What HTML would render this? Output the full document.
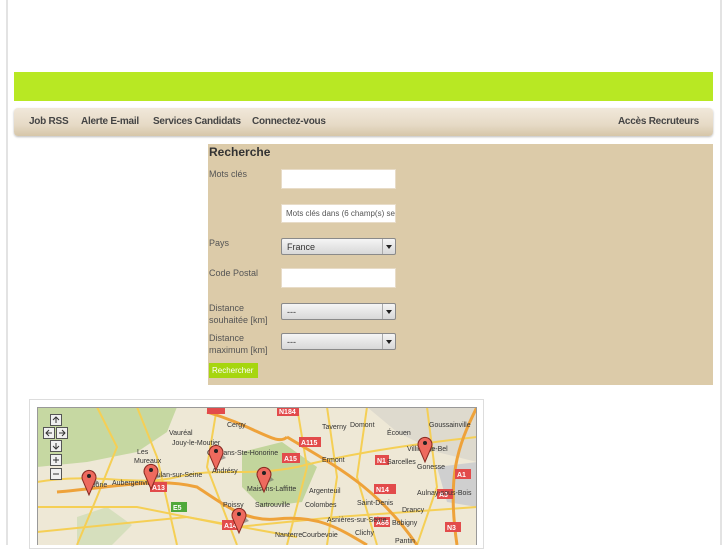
<!DOCTYPE html>
<html><head><meta charset="utf-8"><style>
*{margin:0;padding:0;box-sizing:border-box}
body{width:727px;height:545px;overflow:hidden;background:#fff;font-family:"Liberation Sans",sans-serif;position:relative}
.abs{position:absolute}
.frame{left:6px;top:0;width:716px;height:545px;border-left:2px solid #e3e3e3;border-right:2px solid #e3e3e3}
.green{left:14px;top:72px;width:699px;height:29px;background:#b8e823}
.nav{left:14px;top:108px;width:699px;height:28px;border-radius:4px;background:linear-gradient(#f1e8da,#e6dac6 60%,#d6c6a8);box-shadow:0 1px 2px #bbb}
.nav span{position:absolute;top:8px;font-size:10px;font-weight:bold;color:#444;letter-spacing:-0.25px}
.panel{left:208px;top:144px;width:505px;height:241px;background:#dccba9}
.lbl{font-size:9px;color:#555;line-height:12px}
.inp{background:#fff;border:1px solid #e8dcc8;left:281px;width:115px}
.sel{left:281px;width:115px;height:17px;border:1px solid #8a8a8a;border-radius:2px;background:linear-gradient(#f5f5f5,#d8d8d8);font-size:9px;color:#333;padding:3px 5px}
.sel:after{content:"";position:absolute;right:0;top:0;width:12px;height:15px;border-left:1px solid #aaa}
.sel i{position:absolute;right:3px;top:6px;border:3px solid transparent;border-top:4px solid #222;width:0;height:0;z-index:2}
</style></head><body>
<div class="abs frame"></div>
<div class="abs green"></div>
<div class="abs nav">
<span style="left:15px">Job RSS</span>
<span style="left:67px">Alerte E-mail</span>
<span style="left:139px">Services Candidats</span>
<span style="left:238px">Connectez-vous</span>
<span style="right:14px">Accès Recruteurs</span>
</div>
<div class="abs panel"></div>
<div class="abs" style="left:209px;top:145px;font-size:12px;font-weight:bold;color:#333">Recherche</div>
<div class="abs lbl" style="left:209px;top:168px">Mots clés</div>
<div class="abs inp" style="top:169px;height:20px"></div>
<div class="abs inp" style="top:204px;height:19px;font-size:8px;color:#555;padding:4px 0 0 4px;white-space:nowrap;overflow:hidden">Mots clés dans (6 champ(s) se</div>
<div class="abs lbl" style="left:209px;top:237px">Pays</div>
<div class="abs sel" style="top:238px">France<i></i></div>
<div class="abs lbl" style="left:209px;top:267px">Code Postal</div>
<div class="abs inp" style="top:268px;height:20px"></div>
<div class="abs lbl" style="left:209px;top:302px">Distance<br>souhaitée [km]</div>
<div class="abs sel" style="top:303px">---<i></i></div>
<div class="abs lbl" style="left:209px;top:332px">Distance<br>maximum [km]</div>
<div class="abs sel" style="top:333px">---<i></i></div>
<div class="abs" style="left:209px;top:363px;width:49px;height:15px;background:#a6d60f;color:#fff;font-size:8px;padding:3px 0 0 3px">Rechercher</div>

<div class="abs" style="left:29px;top:399px;width:455px;height:150px;border:1px solid #ddd"></div>
<svg class="abs" style="left:37px;top:407px" width="440" height="138" viewBox="0 0 440 138">
<rect width="440" height="138" fill="#eee8d6"/>
<path d="M0 0H140L130 25 100 45 50 55 0 60Z" fill="#c6d8a2"/>
<path d="M40 110 70 100 95 118 75 138H40Z" fill="#d6dfbd"/>
<path d="M205 45 245 35 280 60 265 95 225 100 205 80Z" fill="#c2d59c"/>
<path d="M330 0H440V55L400 45 360 25Z" fill="#dedace"/>
<path d="M400 60 440 55V100L410 95Z" fill="#cfcfcf"/>
<g fill="none" stroke="#f5cf55" stroke-width="2">
<path d="M0 75 C60 65 100 80 140 70 180 60 210 70 260 60 300 50 350 40 440 30"/>
<path d="M60 0 80 40 60 90 40 138"/><path d="M180 0 170 60 200 138"/>
<path d="M260 0 270 60 250 138"/><path d="M330 0 320 70 340 138"/>
<path d="M0 100 100 100 200 120 300 110 440 100"/><path d="M390 0 400 80 380 138"/>
<path d="M100 0 120 50 140 138"/><path d="M290 0 300 70 290 138"/><path d="M0 125 150 110 260 130"/>
</g>
<g fill="none" stroke="#eea23a" stroke-width="3">
<path d="M20 85 C80 80 120 70 160 80 190 100 210 115 240 112 280 108 300 120 330 138"/>
<path d="M440 0 C420 40 410 70 420 138"/><path d="M250 30 C300 60 340 80 380 138"/>
<path d="M170 5 C220 20 240 40 250 30"/>
</g>
<g font-size="7" fill="#fff" font-weight="bold">
<rect x="170" y="0" width="18" height="7" fill="#e24b4b"/>
<rect x="240" y="0" width="22" height="9" fill="#e24b4b"/><text x="242" y="7">N184</text>
<rect x="262" y="30" width="22" height="10" fill="#e24b4b"/><text x="264" y="38">A115</text>
<rect x="245" y="46" width="18" height="10" fill="#e24b4b"/><text x="247" y="54">A15</text>
<rect x="337" y="77" width="22" height="10" fill="#e24b4b"/><text x="339" y="85">N14</text>
<rect x="338" y="48" width="14" height="10" fill="#e24b4b"/><text x="340" y="56">N1</text>
<rect x="418" y="62" width="16" height="10" fill="#e24b4b"/><text x="420" y="70">A1</text>
<rect x="400" y="82" width="16" height="10" fill="#e24b4b"/><text x="402" y="90">A3</text>
<rect x="337" y="110" width="16" height="10" fill="#e24b4b"/><text x="339" y="118">A86</text>
<rect x="408" y="115" width="16" height="10" fill="#e24b4b"/><text x="410" y="123">N3</text>
<rect x="113" y="75" width="17" height="10" fill="#e24b4b"/><text x="115" y="83">A13</text>
<rect x="185" y="113" width="18" height="10" fill="#e24b4b"/><text x="187" y="121">A14</text>
<rect x="134" y="95" width="16" height="10" fill="#4fa83a"/><text x="136" y="103">E5</text>
</g>
<g font-size="7" fill="#333">
<text x="190" y="20">Cergy</text><text x="132" y="28">Vauréal</text><text x="135" y="38">Jouy-le-Moutier</text>
<text x="285" y="22">Taverny</text><text x="313" y="20">Domont</text><text x="350" y="28">Écouen</text><text x="392" y="20">Goussainville</text>
<text x="100" y="47">Les</text><text x="97" y="56">Mureaux</text><text x="170" y="48">Conflans-Ste-Honorine</text>
<text x="285" y="55">Ermont</text><text x="350" y="57">Sarcelles</text><text x="370" y="44">Villiers-le-Bel</text><text x="380" y="62">Gonesse</text>
<text x="110" y="70">Meulan-sur-Seine</text><text x="175" y="66">Andrésy</text>
<text x="50" y="80">Épône</text><text x="75" y="78">Aubergenville</text><text x="210" y="84">Maisons-Laffitte</text>
<text x="272" y="86">Argenteuil</text><text x="320" y="98">Saint-Denis</text><text x="380" y="88">Aulnay-sous-Bois</text>
<text x="186" y="100">Poissy</text><text x="218" y="100">Sartrouville</text><text x="268" y="100">Colombes</text><text x="365" y="105">Drancy</text>
<text x="290" y="115">Asnières-sur-Seine</text><text x="355" y="118">Bobigny</text>
<text x="238" y="130">Nanterre</text><text x="265" y="130">Courbevoie</text><text x="318" y="128">Clichy</text><text x="358" y="136">Pantin</text>
</g>
<g fill="#f0f0f0" stroke="#555" stroke-width="1">
<rect x="13.5" y="7.5" width="11" height="11"/><rect x="6.5" y="20.5" width="11" height="11"/><rect x="19.5" y="20.5" width="11" height="11"/>
<rect x="13.5" y="33.5" width="11" height="11"/><rect x="13.5" y="47.5" width="11" height="11"/><rect x="13.5" y="61.5" width="11" height="11"/>
</g>
<g stroke="#333" stroke-width="1" fill="none">
<path d="M19 16V10M16 13 19 10 22 13"/><path d="M15 26H9M12 23 9 26 12 29"/><path d="M22 26H28M25 23 28 26 25 29"/>
<path d="M19 36V42M16 39 19 42 22 39"/><path d="M16 53H22M19 50V56"/><path d="M16 67H22"/>
</g>
<g>
<g transform="translate(52,66)"><path d="M0 0 10 10 0 14Z" fill="#555" opacity=".5"/><path d="M0 22 -6 8A7 7 0 1 1 6 8Z" fill="#ee6a5e" stroke="#8a2b22"/><circle cx="0" cy="3" r="2" fill="#222"/></g>
<g transform="translate(114,60)"><path d="M0 0 10 10 0 14Z" fill="#555" opacity=".5"/><path d="M0 22 -6 8A7 7 0 1 1 6 8Z" fill="#ee6a5e" stroke="#8a2b22"/><circle cx="0" cy="3" r="2" fill="#222"/></g>
<g transform="translate(179,41)"><path d="M0 0 10 10 0 14Z" fill="#555" opacity=".5"/><path d="M0 22 -6 8A7 7 0 1 1 6 8Z" fill="#ee6a5e" stroke="#8a2b22"/><circle cx="0" cy="3" r="2" fill="#222"/></g>
<g transform="translate(227,63)"><path d="M0 0 10 10 0 14Z" fill="#555" opacity=".5"/><path d="M0 22 -6 8A7 7 0 1 1 6 8Z" fill="#ee6a5e" stroke="#8a2b22"/><circle cx="0" cy="3" r="2" fill="#222"/></g>
<g transform="translate(202,104)"><path d="M0 0 10 10 0 14Z" fill="#555" opacity=".5"/><path d="M0 22 -6 8A7 7 0 1 1 6 8Z" fill="#ee6a5e" stroke="#8a2b22"/><circle cx="0" cy="3" r="2" fill="#222"/></g>
<g transform="translate(388,33)"><path d="M0 0 10 10 0 14Z" fill="#555" opacity=".5"/><path d="M0 22 -6 8A7 7 0 1 1 6 8Z" fill="#ee6a5e" stroke="#8a2b22"/><circle cx="0" cy="3" r="2" fill="#222"/></g>
</g>
<rect x=".5" y=".5" width="439" height="140" fill="none" stroke="#999"/>
</svg>
</body></html>
